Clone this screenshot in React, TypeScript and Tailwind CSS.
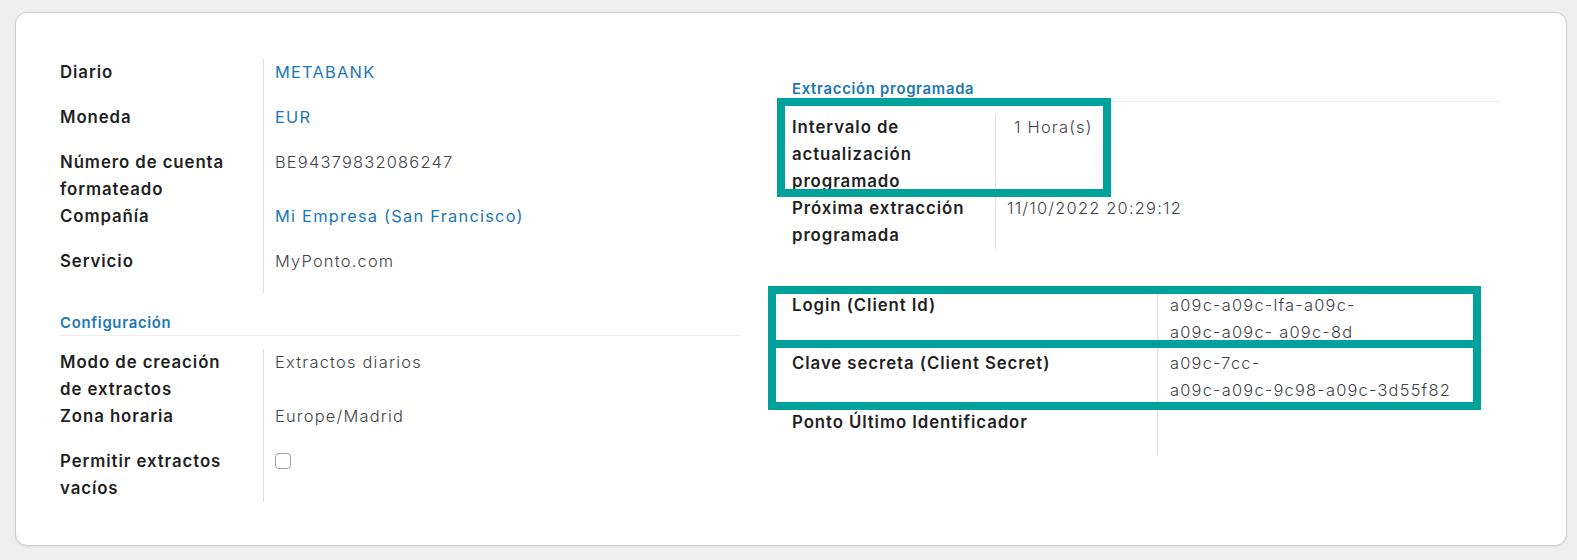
import React from "react";

function Row({
  label,
  children,
  labelW = "w-[203px]",
  minH = "min-h-[45px]",
  valueCls = "",
}: {
  label: React.ReactNode;
  children?: React.ReactNode;
  labelW?: string;
  minH?: string;
  valueCls?: string;
}) {
  return (
    <div className={`flex ${minH}`}>
      <div className={`${labelW} shrink-0 pr-[18px] text-[16.8px] font-semibold tracking-[0.055em] text-[#1f1f24]`}>
        {label}
      </div>
      <div
        className={`flex-1 border-l border-[#dcdfe3] pl-[11px] text-[16.4px] font-light tracking-[0.075em] text-[#3f4247] ${valueCls}`}
      >
        {children}
      </div>
    </div>
  );
}

function Header({ children }: { children: React.ReactNode }) {
  return (
    <div className="border-b border-[#eceef0] pb-[2px] text-[14.8px] font-semibold leading-[20px] tracking-[0.05em] text-[#1a78b4]">
      {children}
    </div>
  );
}

export default function App() {
  return (
    <div className="relative h-[560px] w-full bg-[#efeff0] pl-[15px] pt-[12px] font-['Inter',sans-serif] text-[16px] leading-[27px]">
      <div className="flex h-[534px] w-[1552px] rounded-[12px] border border-[#cdcdd5] bg-white pl-[44px] pt-[46px] shadow-[0_1px_2px_rgba(0,0,0,0.08)]">
        {/* left column */}
        <div className="w-[680px]">
          <div>
            <Row label="Diario">
              <span className="font-normal text-[#1a78b4]">METABANK</span>
            </Row>
            <Row label="Moneda">
              <span className="font-normal text-[#1a78b4]">EUR</span>
            </Row>
            <Row label="Número de cuenta formateado" minH="min-h-[54px]">
              BE94379832086247
            </Row>
            <Row label="Compañía">
              <span className="font-normal text-[#1a78b4]">Mi Empresa (San Francisco)</span>
            </Row>
            <Row label="Servicio">MyPonto.com</Row>
          </div>
          <div className="mt-[20px]">
            <Header>Configuración</Header>
          </div>
          <div className="mt-[13px]">
            <Row label="Modo de creación de extractos" minH="min-h-[54px]">
              Extractos diarios
            </Row>
            <Row label="Zona horaria">Europe/Madrid</Row>
            <Row label="Permitir extractos vacíos" minH="min-h-[53px]">
              <div className="pt-[5px]">
                <div className="h-[16px] w-[16px] rounded-[4px] border border-[#9aa1ab] bg-white" />
              </div>
            </Row>
          </div>
        </div>

        {/* right column */}
        <div className="ml-[52px] w-[708px] pt-[20px]">
          <Header>Extracción programada</Header>
          <div className="mt-[12px]">
            <Row label="Intervalo de actualización programado" minH="min-h-[81px]">
              <span className="pl-[7px]">1 Hora(s)</span>
            </Row>
            <Row label="Próxima extracción programada" minH="min-h-[54px]">
              11/10/2022 20:29:12
            </Row>
          </div>
          <div className="mt-[43px]">
            <Row label="Login (Client Id)" labelW="w-[365px]" minH="min-h-[58px]" valueCls="pl-[12px]">
              a09c-a09c-lfa-a09c-
              <br />
              a09c-a09c- a09c-8d
            </Row>
            <Row label="Clave secreta (Client Secret)" labelW="w-[365px]" minH="min-h-[59px]" valueCls="pl-[12px]">
              a09c-7cc-
              <br />
              a09c-a09c-9c98-a09c-3d55f82
            </Row>
            <Row label="Ponto Último Identificador" labelW="w-[365px]" minH="min-h-[46px]" valueCls="pl-[12px]" />
          </div>
        </div>
      </div>

      {/* annotation frames */}
      <div className="pointer-events-none absolute left-[777px] top-[98px] h-[99px] w-[334px] border-[8px] border-[#00a19b]" />
      <div className="pointer-events-none absolute left-[768px] top-[286px] h-[124px] w-[713px] border-[8px] border-[#00a19b]" />
      <div className="pointer-events-none absolute left-[768px] top-[340px] h-[8px] w-[713px] bg-[#00a19b]" />
    </div>
  );
}
